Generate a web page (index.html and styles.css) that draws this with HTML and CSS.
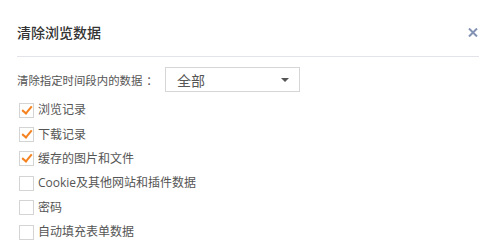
FILE: index.html
```html
<!DOCTYPE html>
<html lang="zh">
<head>
<meta charset="utf-8">
<link rel="stylesheet" href="styles.css">
</head>
<body>
<div class="dialog">
  <div class="header">
    <div class="title">清除浏览数据</div>
    <span class="close" aria-label="关闭">
      <svg width="10" height="9" viewBox="0 0 10 9"><path d="M1 0.5 L9 8.5 M9 0.5 L1 8.5" stroke="#8391b2" stroke-width="2" fill="none"/></svg>
    </span>
  </div>
  <div class="range">
    <span class="range-label">清除指定时间段内的数据<span class="colon">：</span></span>
    <div class="select">
      <span class="select-value">全部</span>
      <span class="arrow"></span>
    </div>
  </div>
  <ul class="options">
    <li class="option"><span class="box checked"></span><span class="text">浏览记录</span></li>
    <li class="option"><span class="box checked"></span><span class="text">下载记录</span></li>
    <li class="option"><span class="box checked"></span><span class="text">缓存的图片和文件</span></li>
    <li class="option"><span class="box"></span><span class="text">Cookie及其他网站和插件数据</span></li>
    <li class="option"><span class="box"></span><span class="text">密码</span></li>
    <li class="option"><span class="box"></span><span class="text">自动填充表单数据</span></li>
  </ul>
</div>
</body>
</html>
```

FILE: styles.css
```css
html, body {
  margin: 0;
  padding: 0;
  background: #fff;
}
body {
  width: 496px;
  height: 245px;
  overflow: hidden;
  font-family: "Open Sans", "Noto Sans CJK SC", sans-serif;
  color: #555;
}
.dialog {
  padding: 0 17px;
}
.header {
  display: flex;
  align-items: center;
  justify-content: space-between;
  padding-top: 22px;
  padding-bottom: 14px;
  border-bottom: 1px solid #e3e3ea;
}
.title {
  font-size: 14px;
  line-height: 20px;
  font-weight: 500;
  color: #333;
  font-family: "Noto Sans CJK SC", sans-serif;
}
.close {
  display: flex;
  width: 10px;
  height: 9px;
  margin-right: 1px;
  margin-top: 1px;
}
.range {
  display: flex;
  align-items: center;
  margin-top: 10px;
}
.range-label {
  display: flex;
  font-size: 11.4px;
  color: #555;
  width: 148px;
  font-family: "Noto Sans CJK SC", sans-serif;
}
.colon {
  margin-left: 4px;
}
.select {
  display: flex;
  align-items: center;
  justify-content: space-between;
  height: 23px;
  border: 1px solid #d6d6d6;
  padding: 0 10px 0 11px;
  box-sizing: content-box;
  width: 112px;
}
.select-value {
  font-size: 14px;
  color: #555;
  font-family: "Noto Sans CJK SC", sans-serif;
}
.arrow {
  width: 0;
  height: 0;
  border-left: 4px solid transparent;
  border-right: 4px solid transparent;
  border-top: 4px solid #555;
}
.options {
  list-style: none;
  margin: 6px 0 0;
  padding: 0 0 0 2px;
}
.option {
  display: flex;
  align-items: center;
  height: 24.4px;
}
.box {
  position: relative;
  width: 13px;
  height: 13px;
  border: 1px solid #d4d4d4;
  background: #fff;
  margin-right: 4px;
  flex: none;
}
.box.checked::after {
  content: "";
  position: absolute;
  left: 4px;
  top: 0px;
  width: 4px;
  height: 8px;
  border-right: 2px solid #f5821f;
  border-bottom: 2px solid #f5821f;
  transform: rotate(40deg);
}
.text {
  font-size: 12px;
  color: #555;
  line-height: 16px;
}
```
